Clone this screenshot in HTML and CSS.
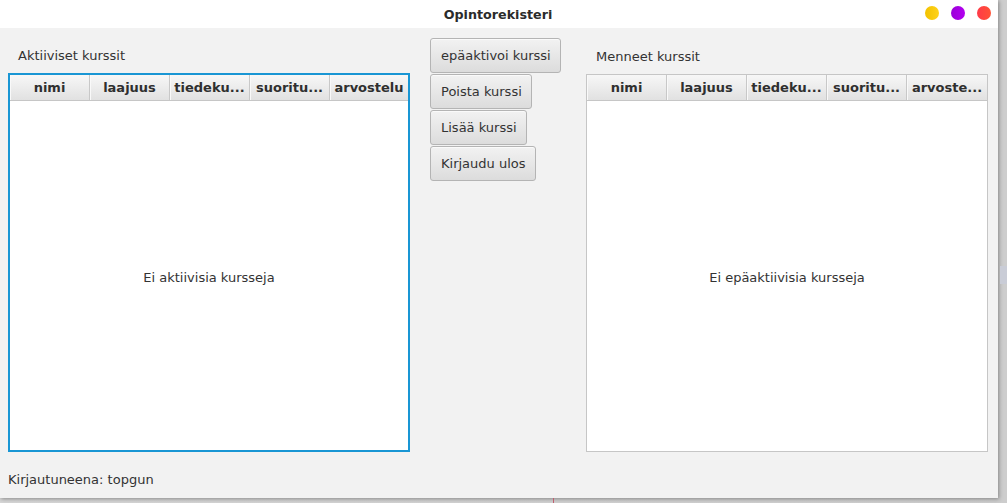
FILE: index.html
```html
<!DOCTYPE html>
<html lang="fi">
<head>
<meta charset="utf-8">
<title>Opintorekisteri</title>
<link rel="stylesheet" href="styles.css">
</head>
<body>
<div class="desktop">
  <div class="window">
    <div class="titlebar">
      <span class="title">Opintorekisteri</span>
      <div class="dots">
        <span class="dot dot-min"></span>
        <span class="dot dot-max"></span>
        <span class="dot dot-close"></span>
      </div>
    </div>
    <div class="content">
      <div class="main">
        <div class="col col-left">
          <div class="label">Aktiiviset kurssit</div>
          <div class="table table-focused">
            <div class="thead">
              <div class="th">nimi</div>
              <div class="th">laajuus</div>
              <div class="th">tiedeku...</div>
              <div class="th">suoritu...</div>
              <div class="th">arvostelu</div>
            </div>
            <div class="tbody">Ei aktiivisia kursseja</div>
          </div>
        </div>
        <div class="buttons">
          <button class="btn">epäaktivoi kurssi</button>
          <button class="btn">Poista kurssi</button>
          <button class="btn">Lisää kurssi</button>
          <button class="btn">Kirjaudu ulos</button>
        </div>
        <div class="col col-right">
          <div class="label">Menneet kurssit</div>
          <div class="table">
            <div class="thead">
              <div class="th">nimi</div>
              <div class="th">laajuus</div>
              <div class="th">tiedeku...</div>
              <div class="th">suoritu...</div>
              <div class="th">arvoste...</div>
            </div>
            <div class="tbody">Ei epäaktiivisia kursseja</div>
          </div>
        </div>
      </div>
      <div class="status">Kirjautuneena: topgun</div>
    </div>
  </div>
  <div class="side-patch"></div>
  <div class="bottom-line"></div>
</div>
</body>
</html>
```

FILE: styles.css
```css
* { box-sizing: border-box; }
html, body {
  margin: 0;
  padding: 0;
  width: 1007px;
  height: 503px;
  overflow: hidden;
  background: #d2d2d2;
  font-family: "DejaVu Sans", Verdana, sans-serif;
  font-size: 13px;
  color: #333;
}
.desktop {
  position: relative;
  width: 1007px;
  height: 503px;
  background: linear-gradient(to right, #d6d6d6, #cdcdcd);
}
.window {
  width: 998px;
  height: 498px;
  display: flex;
  flex-direction: column;
  background: #f2f2f2;
  box-shadow: 1px 1px 4px rgba(0,0,0,0.35);
}
.titlebar {
  position: relative;
  height: 28px;
  flex: none;
  background: #ffffff;
  display: flex;
  align-items: center;
  justify-content: center;
}
.title {
  font-weight: bold;
  font-size: 12.7px;
  color: #2b2b2b;
  margin-right: 2px;
}
.dots {
  position: absolute;
  right: 7px;
  top: 6px;
  display: flex;
  gap: 12px;
}
.dot {
  width: 14px;
  height: 14px;
  border-radius: 50%;
  display: block;
}
.dot-min { background: linear-gradient(to right, #f2c200, #ffd21a); }
.dot-max { background: linear-gradient(to right, #9a00d8, #b300f0); }
.dot-close { background: linear-gradient(to right, #ff3a48, #ff5236); }

.content {
  flex: 1;
  display: flex;
  flex-direction: column;
  padding-left: 8px;
}
.main {
  display: flex;
  align-items: flex-start;
}
.col { width: 402px; flex: none; }
.col-left { padding-top: 18px; }
.col-right { padding-top: 19px; }
.label {
  height: 19px;
  line-height: 19px;
  padding-left: 10px;
  margin-bottom: 8px;
  color: #333;
}
.table {
  background: #fff;
  border: 1px solid #c6c6c6;
  height: 378px;
  display: flex;
  flex-direction: column;
}
.table-focused {
  border: 2px solid #1996d4;
  height: 379px;
}
.thead {
  display: flex;
  height: 26px;
  flex: none;
  background: linear-gradient(to bottom, #f7f7f7, #e1e1e1);
  border-bottom: 1px solid #c6c6c6;
}
.th {
  width: 80px;
  flex: none;
  border-right: 1px solid #c8c8c8;
  box-shadow: inset 1px 0 0 #f9f9f9;
  font-weight: bold;
  font-size: 13px;
  color: #2f2f2f;
  display: flex;
  align-items: center;
  justify-content: center;
  white-space: nowrap;
  overflow: hidden;
}
.th:last-child { border-right: none; flex: 1; }
.tbody {
  flex: 1;
  display: flex;
  align-items: center;
  justify-content: center;
  color: #333;
  padding-top: 3px;
}
.buttons {
  width: 156px;
  flex: none;
  margin-left: 20px;
  padding-top: 10px;
  display: flex;
  flex-direction: column;
  align-items: flex-start;
  gap: 1px;
}
.btn {
  font-family: "DejaVu Sans", Verdana, sans-serif;
  font-size: 13px;
  color: #333;
  height: 35px;
  padding: 0 9px 0 10px;
  border: 1px solid #b4b4b4;
  border-radius: 3px;
  background: linear-gradient(to bottom, #f2f2f2, #dcdcdc);
  box-shadow: inset 0 1px 0 #fafafa;
  cursor: default;
}
.status {
  margin-top: auto;
  height: 46px;
  line-height: 18px;
  padding-top: 19px;
  color: #333;
}
.side-patch {
  position: absolute;
  left: 1000px;
  top: 266px;
  width: 7px;
  height: 18px;
  background: #c9ccd6;
}
.bottom-line {
  position: absolute;
  left: 553px;
  top: 498px;
  width: 1px;
  height: 5px;
  background: #c06070;
}
```
